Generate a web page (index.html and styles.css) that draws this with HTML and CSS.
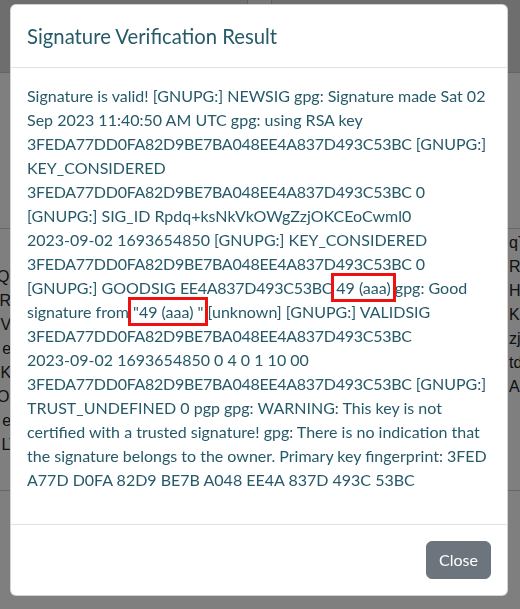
FILE: index.html
```html
<!DOCTYPE html>
<html lang="en">
<head>
<meta charset="utf-8">
<title>Signature Verification Result</title>
<link rel="stylesheet" href="styles.css">
</head>
<body>
<div class="page">
  <header class="topbar">
    <span class="tab"></span>
  </header>
  <div class="row row-empty"></div>
  <div class="row row-data">
    <div class="cell cell-left">
      <div>QY</div><div>R4</div><div>VL</div><div>eb</div><div>Ko</div><div>OX</div><div>ee</div><div>LV</div>
    </div>
    <div class="cell cell-mid"></div>
    <div class="cell cell-right">
      <div>qTx</div><div>R8m</div><div>HVp</div><div>KYd</div><div>zjw</div><div>tdc</div><div>A</div>
    </div>
  </div>
  <div class="row row-fill"></div>
</div>

<div class="backdrop">
  <div class="dialog" role="dialog" aria-labelledby="dlg-title">
    <div class="dialog-header">
      <h5 class="dialog-title" id="dlg-title">Signature Verification Result</h5>
    </div>
    <div class="dialog-body">
      <p class="result">Signature is valid! [GNUPG:] NEWSIG gpg: Signature made Sat 02<br>
Sep 2023 11:40:50 AM UTC gpg: using RSA key<br>
<span class="hex">3FEDA77DD0FA82D9BE7BA048EE4A837D493C53BC</span> [GNUPG:]<br>
KEY_CONSIDERED<br>
<span class="hex">3FEDA77DD0FA82D9BE7BA048EE4A837D493C53BC</span> 0<br>
[GNUPG:] SIG_ID Rpdq+ksNkVkOWgZzjOKCEoCwml0<br>
2023-09-02 1693654850 [GNUPG:] KEY_CONSIDERED<br>
<span class="hex">3FEDA77DD0FA82D9BE7BA048EE4A837D493C53BC</span> 0<br>
[GNUPG:] GOODSIG <span class="hex">EE4A837D493C53BC</span> <span class="mark">49 (aaa)</span> gpg: Good<br>
signature from <span class="mark">"49 (aaa) "</span> [unknown] [GNUPG:] VALIDSIG<br>
<span class="hex">3FEDA77DD0FA82D9BE7BA048EE4A837D493C53BC</span><br>
2023-09-02 1693654850 0 4 0 1 10 00<br>
<span class="hex">3FEDA77DD0FA82D9BE7BA048EE4A837D493C53BC</span> [GNUPG:]<br>
TRUST_UNDEFINED 0 pgp gpg: WARNING: This key is not<br>
certified with a trusted signature! gpg: There is no indication that<br>
the signature belongs to the owner. Primary key fingerprint: 3FED<br>
A77D D0FA 82D9 BE7B A048 EE4A 837D 493C 53BC</p>
    </div>
    <div class="dialog-footer">
      <button type="button" class="btn-close-text">Close</button>
    </div>
  </div>
</div>
</body>
</html>
```

FILE: styles.css
```css
* { box-sizing: border-box; }

html, body {
  margin: 0;
  padding: 0;
  height: 100%;
}

body {
  font-family: "Lato", "Liberation Sans", sans-serif;
  background: #ffffff;
  color: #212529;
  overflow: hidden;
}

/* background page */
.page {
  display: flex;
  flex-direction: column;
  height: 100%;
  overflow: hidden;
}

.topbar {
  flex-shrink: 0;
  height: 73px;
  background: #dddddd;
  border-bottom: 1px solid #c8c8c8;
  display: flex;
  padding-left: 247px;
}

.tab {
  width: 25px;
  height: 10px;
  border-left: 1px solid #bbbbbb;
  border-right: 1px solid #bbbbbb;
  background: #eeeeee;
}

.row {
  flex-shrink: 0;
  display: grid;
  grid-template-columns: 12px 1fr 12px;
  border-bottom: 1px solid #cfcfcf;
}

.row-empty {
  height: 156px;
}

.row-fill {
  flex: 1 1 auto;
  min-height: 0;
  border-bottom: none;
}

.row-data {
  height: 262px;
  font-family: "Liberation Sans", sans-serif;
  font-size: 16px;
  line-height: 24px;
  color: #222222;
}

.cell {
  overflow: hidden;
  white-space: nowrap;
}

.cell-left {
  padding-top: 36px;
  display: flex;
  flex-direction: column;
  align-items: flex-end;
}

.cell-left div {
  margin-right: -8px;
}

.cell-right {
  padding-top: 2px;
  padding-left: 1px;
}

/* modal */
.backdrop {
  position: fixed;
  inset: 0;
  background: rgba(0, 0, 0, 0.5);
  display: flex;
  align-items: flex-start;
  padding: 4px 12px 0 10px;
}

.dialog {
  width: 498px;
  background: #ffffff;
  border: 1px solid rgba(0, 0, 0, 0.175);
  border-radius: 6px;
  color: #275a69;
}

.dialog-header {
  padding: 16px;
  border-bottom: 1px solid #dee2e6;
}

.dialog-title {
  margin: 0;
  font-size: 20.3px;
  line-height: 30px;
  font-weight: 400;
  color: #275a69;
}

.dialog-body {
  padding: 16px;
}

.result {
  margin: 0 0 16px;
  font-size: 16px;
  line-height: 24px;
  white-space: nowrap;
}

.hex {
  letter-spacing: -0.28px;
}

.mark {
  outline: 3px solid #ee1111;
  outline-offset: 2px;
}

.dialog-footer {
  display: flex;
  justify-content: flex-end;
  padding: 12px;
  border-top: 1px solid #dee2e6;
}

.btn-close-text {
  margin: 4px;
  height: 38px;
  padding: 6px 12px;
  font-family: inherit;
  font-size: 16px;
  line-height: 24px;
  color: #ffffff;
  background: #6c757d;
  border: 1px solid #6c757d;
  border-radius: 6px;
}
```
